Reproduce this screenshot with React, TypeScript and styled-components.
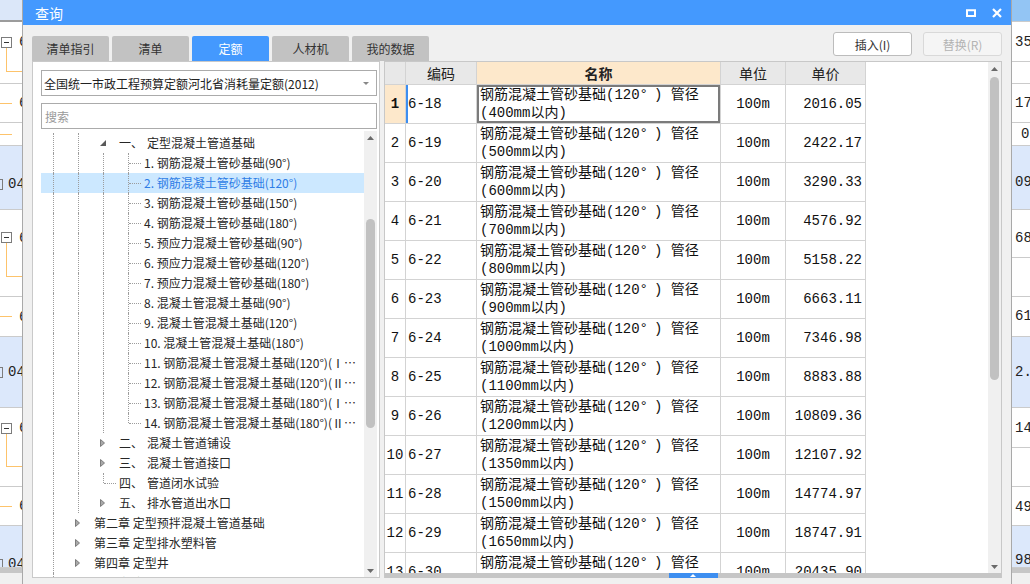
import React from "react";
import styled, { createGlobalStyle, css } from "styled-components";

const CJK = `"Noto Sans CJK SC", "Noto Sans", sans-serif`;
const MONO = `"Liberation Mono", "Noto Sans CJK SC", monospace`;
const ORANGE = "#fdc36b";

const GlobalStyle = createGlobalStyle`
  * { box-sizing: border-box; }
  html, body { margin: 0; padding: 0; }
  body { font-family: ${CJK}; background: #fff; overflow: hidden; }
`;

const Page = styled.div`
  position: relative;
  width: 1030px;
  height: 584px;
  overflow: hidden;
  display: flex;
  justify-content: space-between;
  background: #fff;
`;

/* ---------- background application strips ---------- */
const Strip = styled.div<{ $w: number }>`
  width: ${(p) => p.$w}px;
  flex: none;
  display: flex;
  flex-direction: column;
  overflow: hidden;
  font-family: ${MONO};
  font-size: 14px;
  color: #222;
`;
const BgHeader = styled.div<{ $bg: string; $line: string }>`
  height: 22px;
  flex: none;
  background: ${(p) => p.$bg};
  border-bottom: ${(p) => p.$line};
`;
const BgRow = styled.div<{ $h: number; $blue?: boolean; $center?: boolean }>`
  height: ${(p) => p.$h}px;
  flex: none;
  display: flex;
  align-items: ${(p) => (p.$center ? "center" : "flex-start")};
  overflow: hidden;
  background: ${(p) => (p.$blue ? "#dce8fb" : "#fff")};
  border-bottom: 1px solid #cbcbcb;
`;
const BgBottom = styled.div`
  flex: 1;
  background: #f0f0f0;
  border-top: 5px solid #c6c6c6;
`;
const Gutter = styled.div<{ $pt: number }>`
  width: 13px;
  flex: none;
  padding: ${(p) => p.$pt}px 0 0 1px;
  display: flex;
  flex-direction: column;
`;
const MinusBox = styled.div`
  width: 11px;
  height: 11px;
  flex: none;
  border: 1px solid #7c7c7c;
  background: #fff;
  display: flex;
  align-items: center;
  justify-content: center;
  &::after {
    content: "";
    width: 5px;
    height: 1px;
    background: #333;
  }
`;
const Elbow = styled.div<{ $h: number }>`
  margin-left: 5px;
  width: 17px;
  height: ${(p) => p.$h}px;
  flex: none;
  border-left: 1px solid ${ORANGE};
  border-bottom: 1px solid ${ORANGE};
`;
const Tick = styled.div`
  width: 12px;
  height: 1px;
  flex: none;
  background: ${ORANGE};
`;
const CutBox = styled.div`
  width: 3px;
  height: 11px;
  flex: none;
  margin-top: 3px;
  border: 1px solid #7c7c7c;
  border-left: none;
`;
const BgText = styled.div<{ $pt?: number; $pl?: number }>`
  padding-top: ${(p) => p.$pt ?? 0}px;
  padding-left: ${(p) => p.$pl ?? 0}px;
  line-height: 16px;
  white-space: nowrap;
  flex: none;
`;
const BlueLead = styled.div<{ $pt: number }>`
  display: flex;
  align-items: flex-start;
  padding-top: ${(p) => p.$pt}px;
  gap: 5px;
`;

const rightRows: { h: number; t?: string; pt?: number; pl?: number; blue?: boolean }[] = [
  { h: 40, t: "35", pt: 12 },
  { h: 22 },
  { h: 39, t: "17", pt: 11 },
  { h: 23, t: "0", pt: 3, pl: 9 },
  { h: 64, t: "09", pt: 28, blue: true },
  { h: 48, t: "68", pt: 20 },
  { h: 39 },
  { h: 40, t: "61", pt: 11 },
  { h: 71, t: "2.3", pt: 27, blue: true },
  { h: 40, t: "14", pt: 12 },
  { h: 39 },
  { h: 39, t: "49", pt: 12 },
  { h: 42, t: "98", pt: 26, blue: true },
];

/* ---------- dialog ---------- */
const Dialog = styled.div`
  position: absolute;
  left: 22px;
  top: 0;
  width: 990px;
  height: 584px;
  background: #f0f0f0;
  border-left: 1px solid #a9a9a9;
  border-right: 1px solid #a9a9a9;
  display: flex;
  flex-direction: column;
`;
const TitleBar = styled.div`
  height: 25px;
  flex: none;
  background: #4499fe;
  color: #fff;
  display: flex;
  align-items: center;
  justify-content: space-between;
  padding: 0 9px 0 12px;
  font-size: 14px;
`;
const WinCtrls = styled.div`
  display: flex;
  align-items: center;
  gap: 16px;
`;
const Body = styled.div`
  flex: 1;
  min-height: 0;
  display: flex;
  flex-direction: column;
  padding: 7px 9px 6px 9px;
`;
const TopRow = styled.div`
  height: 29px;
  flex: none;
  display: flex;
  justify-content: space-between;
`;
const Tabs = styled.div`
  display: flex;
  gap: 3px;
  align-self: flex-end;
`;
const Tab = styled.div<{ $active?: boolean }>`
  width: 77px;
  height: 25px;
  display: flex;
  align-items: center;
  justify-content: center;
  font-size: 12px;
  border-radius: 2px 2px 0 0;
  background: ${(p) => (p.$active ? "#4499fe" : "#c2c2c2")};
  color: ${(p) => (p.$active ? "#fff" : "#333")};
`;
const Buttons = styled.div`
  display: flex;
  gap: 11px;
  align-self: flex-start;
`;
const Btn = styled.div<{ $disabled?: boolean }>`
  width: 79px;
  height: 24px;
  border-radius: 3px;
  display: flex;
  align-items: center;
  justify-content: center;
  font-size: 12px;
  background: ${(p) => (p.$disabled ? "#f5f5f5" : "#fff")};
  border: 1px solid ${(p) => (p.$disabled ? "#d9d9d9" : "#bcbcbc")};
  color: ${(p) => (p.$disabled ? "#b3b3b3" : "#333")};
`;
const Content = styled.div`
  flex: 1;
  min-height: 0;
  display: flex;
  gap: 4px;
`;

/* ---------- left panel ---------- */
const LeftPanel = styled.div`
  width: 348px;
  flex: none;
  background: #fff;
  border: 1px solid #c9c9c9;
  padding: 8px 2px 0 8px;
  display: flex;
  flex-direction: column;
`;
const Select = styled.div`
  height: 26px;
  flex: none;
  border: 1px solid #ababab;
  display: flex;
  align-items: center;
  justify-content: space-between;
  padding: 0 7px 0 2px;
  font-size: 12px;
  color: #222;
`;
const SearchBox = styled.div`
  height: 26px;
  flex: none;
  margin-top: 7px;
  border: 1px solid #ababab;
  display: flex;
  align-items: center;
  padding-left: 3px;
  font-size: 12px;
  color: #9a9a9a;
`;
const Tree = styled.div`
  flex: 1;
  min-height: 0;
  margin-top: 2px;
  display: flex;
`;
const TreeList = styled.div`
  flex: 1;
  min-width: 0;
  overflow: hidden;
  padding-top: 2px;
`;
const TreeRow = styled.div<{ $sel?: boolean }>`
  height: 20px;
  display: flex;
  background: ${(p) => (p.$sel ? "#cce8ff" : "transparent")};
  color: ${(p) => (p.$sel ? "#2e7de6" : "#262626")};
  font-size: 12px;
`;

type Guide = "v" | "tee" | "elbow" | "open" | "closed" | "none";

const GuideCell = styled.div<{ $kind: Guide }>`
  position: relative;
  width: 25px;
  flex: none;
  display: flex;
  align-items: center;
  ${(p) =>
    (p.$kind === "v" || p.$kind === "tee") &&
    css`
      &::before {
        content: "";
        position: absolute;
        left: 12px;
        top: 0;
        bottom: 0;
        border-left: 1px dotted #9c9c9c;
      }
    `}
  ${(p) =>
    p.$kind === "elbow" &&
    css`
      &::before {
        content: "";
        position: absolute;
        left: 12px;
        top: 0;
        height: 10px;
        border-left: 1px dotted #9c9c9c;
      }
    `}
  ${(p) =>
    (p.$kind === "tee" || p.$kind === "elbow") &&
    css`
      &::after {
        content: "";
        position: absolute;
        left: 13px;
        right: 0;
        top: 10px;
        border-top: 1px dotted #9c9c9c;
      }
    `}
  svg {
    margin-left: 9px;
  }
`;
const Label = styled.div`
  flex: 1;
  min-width: 0;
  padding: 0 5px 0 3px;
  line-height: 20px;
  white-space: nowrap;
  overflow: hidden;
  text-overflow: ellipsis;
`;
const Ordinal = styled.span`
  display: inline-block;
  width: 28px;
`;

/* ---------- scrollbars ---------- */
const VScroll = styled.div`
  width: 13px;
  flex: none;
  background: #f0f0f0;
  display: flex;
  flex-direction: column;
`;
const ScrollArrow = styled.div`
  height: 13px;
  flex: none;
  display: flex;
  align-items: center;
  justify-content: center;
`;
const ScrollTrack = styled.div<{ $offset: number }>`
  flex: 1;
  min-height: 0;
  padding-top: ${(p) => p.$offset}px;
  display: flex;
  flex-direction: column;
  align-items: center;
`;
const Thumb = styled.div<{ $h: number }>`
  width: 9px;
  height: ${(p) => p.$h}px;
  flex: none;
  border-radius: 5px;
  background: #c1c1c1;
`;

/* ---------- table ---------- */
const TablePane = styled.div`
  flex: 1;
  min-width: 0;
  display: flex;
  flex-direction: column;
  background: #fff;
  border: 1px solid #c8c8c8;
  border-bottom: none;
`;
const TableMain = styled.div`
  flex: 1;
  min-height: 0;
  display: flex;
`;
const GridWrap = styled.div`
  flex: 1;
  min-width: 0;
  overflow: hidden;
`;
const Grid = styled.div`
  display: grid;
  grid-template-columns: 21px 71px 244px 65px 80px;
  grid-template-rows: 23px;
  grid-auto-rows: 39px;
  width: max-content;
`;
const Cell = styled.div`
  border-right: 1px solid #d3d3d3;
  border-bottom: 1px solid #d3d3d3;
  font-family: ${MONO};
  font-size: 14px;
  color: #111;
  display: flex;
  align-items: center;
  white-space: nowrap;
  overflow: hidden;
`;
const HeadCell = styled(Cell)<{ $hl?: boolean }>`
  justify-content: center;
  font-family: ${CJK};
  color: #222;
  background: ${(p) => (p.$hl ? "#fde8cb" : "#e8e8e8")};
  font-weight: ${(p) => (p.$hl ? 700 : 400)};
`;
const NumCell = styled(Cell)<{ $cur?: boolean }>`
  justify-content: center;
  background: ${(p) => (p.$cur ? "#fde8cb" : "#fff")};
  font-weight: ${(p) => (p.$cur ? 700 : 400)};
`;
const CodeCell = styled(Cell)<{ $cur?: boolean }>`
  padding-left: 2px;
  ${(p) =>
    p.$cur &&
    css`
      box-shadow: inset 2px 0 0 #3d8ef0;
    `}
`;
const NameCell = styled(Cell)<{ $cur?: boolean }>`
  flex-direction: column;
  align-items: flex-start;
  justify-content: center;
  padding-left: 3px;
  line-height: 18px;
  ${(p) =>
    p.$cur &&
    css`
      box-shadow: inset 0 0 0 2px #7b7b7b;
    `}
`;
const Deg = styled.span`
  padding-right: 6px;
`;
const UnitCell = styled(Cell)`
  justify-content: center;
`;
const PriceCell = styled(Cell)`
  justify-content: flex-end;
  padding-right: 3px;
`;
const SplitBar = styled.div`
  height: 5px;
  flex: none;
  background: #c6c6c6;
  display: flex;
  justify-content: center;
`;
const Handle = styled.div`
  width: 49px;
  height: 5px;
  background: #3d8ef0;
  display: flex;
  align-items: center;
  justify-content: center;
`;

/* ---------- icons ---------- */
const Closed = () => (
  <svg width="5" height="8" viewBox="0 0 5 8">
    <path d="M0.5 0.5 L4.5 4 L0.5 7.5 Z" fill="#a9a9a9" stroke="#7d7d7d" strokeWidth="1" />
  </svg>
);
const Open = () => (
  <svg width="6" height="6" viewBox="0 0 6 6">
    <path d="M6 0 L6 6 L0 6 Z" fill="#595959" />
  </svg>
);
const Tri = ({ dir, color, w = 7, h = 4 }: { dir: "up" | "down"; color: string; w?: number; h?: number }) => (
  <svg width={w} height={h} viewBox={`0 0 ${w} ${h}`}>
    {dir === "up" ? (
      <path d={`M0 ${h} L${w / 2} 0 L${w} ${h} Z`} fill={color} />
    ) : (
      <path d={`M0 0 L${w} 0 L${w / 2} ${h} Z`} fill={color} />
    )}
  </svg>
);

/* ---------- data ---------- */
const items = [
  "1. 钢筋混凝土管砂基础(90°)",
  "2. 钢筋混凝土管砂基础(120°)",
  "3. 钢筋混凝土管砂基础(150°)",
  "4. 钢筋混凝土管砂基础(180°)",
  "5. 预应力混凝土管砂基础(90°)",
  "6. 预应力混凝土管砂基础(120°)",
  "7. 预应力混凝土管砂基础(180°)",
  "8. 混凝土管混凝土基础(90°)",
  "9. 混凝土管混凝土基础(120°)",
  "10. 混凝土管混凝土基础(180°)",
  "11. 钢筋混凝土管混凝土基础(120°)(Ⅰ级管)",
  "12. 钢筋混凝土管混凝土基础(120°)(Ⅱ级管)",
  "13. 钢筋混凝土管混凝土基础(180°)(Ⅰ级管)",
  "14. 钢筋混凝土管混凝土基础(180°)(Ⅱ级管)",
];

type TreeItem = { g: Guide[]; ord?: string; text: string; sel?: boolean };

const treeData: TreeItem[] = [
  { g: ["v", "v", "open"], ord: "一、", text: "定型混凝土管道基础" },
  ...items.map((t, i) => ({
    g: ["v", "v", "v", i < items.length - 1 ? "tee" : "elbow"] as Guide[],
    text: t,
    sel: i === 1,
  })),
  { g: ["v", "v", "closed"], ord: "二、", text: "混凝土管道铺设" },
  { g: ["v", "v", "closed"], ord: "三、", text: "混凝土管道接口" },
  { g: ["v", "v", "elbow"], ord: "四、", text: "管道闭水试验" },
  { g: ["v", "v", "closed"], ord: "五、", text: "排水管道出水口" },
  { g: ["v", "closed"], text: "第二章 定型预拌混凝土管道基础" },
  { g: ["v", "closed"], text: "第三章 定型排水塑料管" },
  { g: ["v", "closed"], text: "第四章 定型井" },
  { g: ["v", "closed"], text: "第五章 定型预拌混凝土井" },
];

const sizes = ["400", "500", "600", "700", "800", "900", "1000", "1100", "1200", "1350", "1500", "1650", "1800"];
const prices = [
  "2016.05", "2422.17", "3290.33", "4576.92", "5158.22", "6663.11", "7346.98",
  "8883.88", "10809.36", "12107.92", "14774.97", "18747.91", "20435.90",
];
const tableRows = sizes.map((s, i) => ({
  n: String(i + 1),
  code: `6-${18 + i}`,
  name2: `(${s}mm以内)`,
  unit: "100m",
  price: prices[i],
}));

const tabs = ["清单指引", "清单", "定额", "人材机", "我的数据"];

export default function App() {
  return (
    <>
      <GlobalStyle />
      <Page>
        <Strip $w={22}>
          <BgHeader $bg="#dbe7f9" $line="2px solid #9c9c9c" />
          <BgRow $h={62}>
            <Gutter $pt={15}>
              <MinusBox />
              <Elbow $h={24} />
            </Gutter>
            <BgText $pt={12} $pl={6}>6</BgText>
          </BgRow>
          <BgRow $h={39} $center>
            <Tick />
            <BgText $pl={7}>6</BgText>
          </BgRow>
          <BgRow $h={23} $center>
            <Tick />
          </BgRow>
          <BgRow $h={64} $blue>
            <BlueLead $pt={30}>
              <CutBox />
              <BgText>04</BgText>
            </BlueLead>
          </BgRow>
          <BgRow $h={87}>
            <Gutter $pt={22}>
              <MinusBox />
              <Elbow $h={34} />
            </Gutter>
            <BgText $pt={20} $pl={6}>6</BgText>
          </BgRow>
          <BgRow $h={40} $center>
            <Tick />
            <BgText $pl={7}>6</BgText>
          </BgRow>
          <BgRow $h={71} $blue>
            <BlueLead $pt={27}>
              <CutBox />
              <BgText>04</BgText>
            </BlueLead>
          </BgRow>
          <BgRow $h={79}>
            <Gutter $pt={15}>
              <MinusBox />
              <Elbow $h={33} />
            </Gutter>
            <BgText $pt={12} $pl={6}>6</BgText>
          </BgRow>
          <BgRow $h={39} $center>
            <Tick />
            <BgText $pl={7}>6</BgText>
          </BgRow>
          <BgRow $h={42} $blue>
            <BlueLead $pt={30}>
              <CutBox />
              <BgText>04</BgText>
            </BlueLead>
          </BgRow>
          <BgBottom />
        </Strip>

        <Strip $w={18}>
          <BgHeader $bg="#93c5f4" $line="1px solid #cbcbcb" />
          {rightRows.map((r, i) => (
            <BgRow key={i} $h={r.h} $blue={r.blue}>
              {r.t && (
                <BgText $pt={r.pt} $pl={r.pl ?? 3}>
                  {r.t}
                </BgText>
              )}
            </BgRow>
          ))}
          <BgBottom />
        </Strip>

        <Dialog>
          <TitleBar>
            <span>查询</span>
            <WinCtrls>
              <svg width="10" height="8" viewBox="0 0 10 8">
                <rect x="1" y="1.25" width="8" height="5.75" fill="none" stroke="#fff" strokeWidth="2" />
              </svg>
              <svg width="10" height="10" viewBox="0 0 10 10">
                <path d="M1 1 L9 9 M9 1 L1 9" stroke="#fff" strokeWidth="2.2" />
              </svg>
            </WinCtrls>
          </TitleBar>
          <Body>
            <TopRow>
              <Tabs>
                {tabs.map((t) => (
                  <Tab key={t} $active={t === "定额"}>
                    {t}
                  </Tab>
                ))}
              </Tabs>
              <Buttons>
                <Btn>插入(I)</Btn>
                <Btn $disabled>替换(R)</Btn>
              </Buttons>
            </TopRow>
            <Content>
              <LeftPanel>
                <Select>
                  <span>全国统一市政工程预算定额河北省消耗量定额(2012)</span>
                  <Tri dir="down" color="#888" w={6} h={3} />
                </Select>
                <SearchBox>搜索</SearchBox>
                <Tree>
                  <TreeList>
                    {treeData.map((r, i) => (
                      <TreeRow key={i} $sel={r.sel}>
                        {r.g.map((k, j) => (
                          <GuideCell key={j} $kind={k}>
                            {k === "open" && <Open />}
                            {k === "closed" && <Closed />}
                          </GuideCell>
                        ))}
                        <Label>
                          {r.ord && <Ordinal>{r.ord}</Ordinal>}
                          {r.text}
                        </Label>
                      </TreeRow>
                    ))}
                  </TreeList>
                  <VScroll>
                    <ScrollArrow>
                      <Tri dir="up" color="#6a6a6a" />
                    </ScrollArrow>
                    <ScrollTrack $offset={75}>
                      <Thumb $h={209} />
                    </ScrollTrack>
                    <ScrollArrow>
                      <Tri dir="down" color="#6a6a6a" />
                    </ScrollArrow>
                  </VScroll>
                </Tree>
              </LeftPanel>

              <TablePane>
                <TableMain>
                  <GridWrap>
                    <Grid>
                      <HeadCell />
                      <HeadCell>编码</HeadCell>
                      <HeadCell $hl>名称</HeadCell>
                      <HeadCell>单位</HeadCell>
                      <HeadCell>单价</HeadCell>
                      {tableRows.map((r, i) => (
                        <React.Fragment key={r.n}>
                          <NumCell $cur={i === 0}>{r.n}</NumCell>
                          <CodeCell $cur={i === 0}>{r.code}</CodeCell>
                          <NameCell $cur={i === 0}>
                            <span>
                              钢筋混凝土管砂基础(120<Deg>°</Deg>) 管径
                            </span>
                            <span>{r.name2}</span>
                          </NameCell>
                          <UnitCell>{r.unit}</UnitCell>
                          <PriceCell>{r.price}</PriceCell>
                        </React.Fragment>
                      ))}
                    </Grid>
                  </GridWrap>
                  <VScroll>
                    <ScrollArrow>
                      <Tri dir="up" color="#6a6a6a" />
                    </ScrollArrow>
                    <ScrollTrack $offset={2}>
                      <Thumb $h={303} />
                    </ScrollTrack>
                    <ScrollArrow>
                      <Tri dir="down" color="#6a6a6a" />
                    </ScrollArrow>
                  </VScroll>
                </TableMain>
                <SplitBar>
                  <Handle>
                    <Tri dir="up" color="#fff" w={6} h={3} />
                  </Handle>
                </SplitBar>
              </TablePane>
            </Content>
          </Body>
        </Dialog>
      </Page>
    </>
  );
}
